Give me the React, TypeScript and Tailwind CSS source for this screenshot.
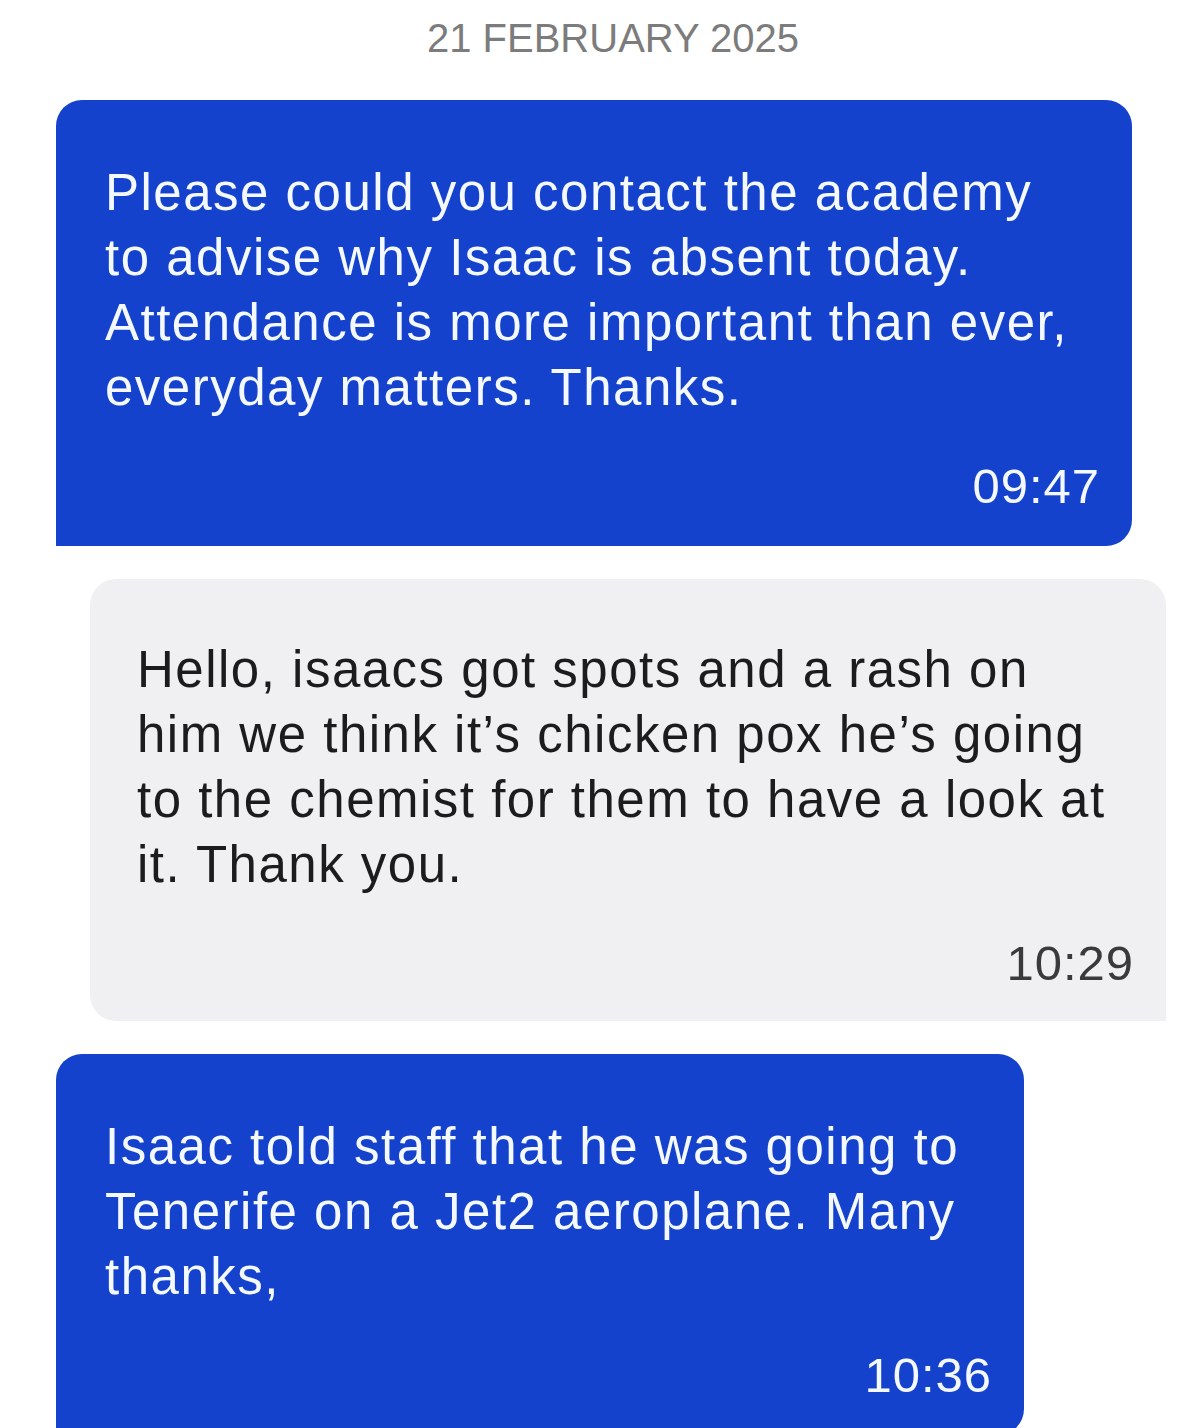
import React from 'react';

type Msg = {
  lines: string[];
  time: string;
  mine: boolean;
  width: string;
};

// lines are split where the screenshot wraps them
const messages: Msg[] = [
  {
    lines: [
      'Please could you contact the academy',
      'to advise why Isaac is absent today.',
      'Attendance is more important than ever,',
      'everyday matters. Thanks.',
    ],
    time: '09:47',
    mine: true,
    width: 'w-[1076px]',
  },
  {
    lines: [
      'Hello, isaacs got spots and a rash on',
      'him we think it\u2019s chicken pox he\u2019s going',
      'to the chemist for them to have a look at',
      'it. Thank you.',
    ],
    time: '10:29',
    mine: false,
    width: 'w-[1076px]',
  },
  {
    lines: [
      'Isaac told staff that he was going to',
      'Tenerife on a Jet2 aeroplane. Many',
      'thanks,',
    ],
    time: '10:36',
    mine: true,
    width: 'w-[968px]',
  },
];

const Bubble = ({ msg }: { msg: Msg }) => (
  <div
    className={
      msg.mine
        ? `${msg.width} self-start ml-[56px] bg-[#1542cd] text-[#f4f8ff] rounded-[26px] rounded-bl-none pl-[49px] pr-[32px] pt-[60px] pb-[36px]`
        : `${msg.width} self-end mr-[34px] bg-[#f0f0f2] text-[#1c1c1e] rounded-[26px] rounded-br-none pl-[47px] pr-[32px] pt-[58px] pb-[34px]`
    }
  >
    <div className="text-[51px] leading-[65px] tracking-[1.5px]">
      {msg.lines.map((l) => (
        <div key={l} className="whitespace-nowrap">
          {l}
        </div>
      ))}
    </div>
    <div
      className={`mt-[42px] text-right text-[49px] leading-[48px] tracking-[1px] ${
        msg.mine ? 'text-[#f4f8ff]' : 'text-[#3a3a3c]'
      }`}
    >
      {msg.time}
    </div>
  </div>
);

export default function App() {
  return (
    <div
      className="min-h-screen bg-white flex flex-col pt-[18px] overflow-hidden"
      style={{ fontFamily: '"Liberation Sans", Arial, sans-serif' }}
    >
      <div className="text-center pl-[26px] text-[40px] leading-[40px] text-[#7c7c7c] mb-[42px]">
        21 FEBRUARY 2025
      </div>
      <div className="flex flex-col gap-[33px]">
        {messages.map((m) => (
          <Bubble key={m.time} msg={m} />
        ))}
      </div>
    </div>
  );
}
